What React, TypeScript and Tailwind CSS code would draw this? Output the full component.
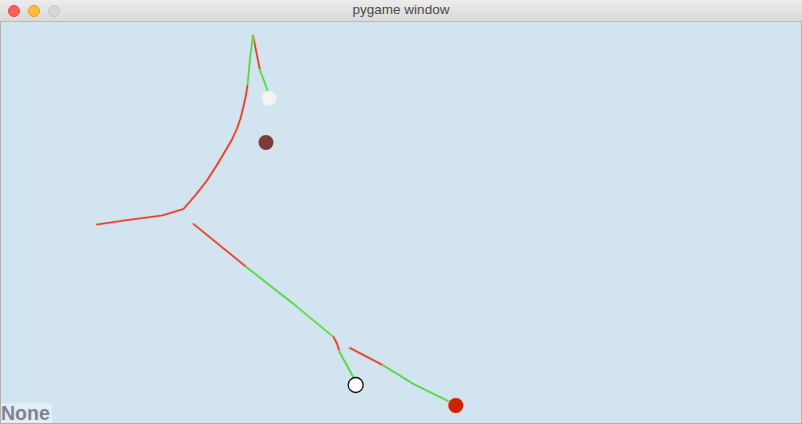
const red = "#d6432f";
const green = "#52d452";

type Seg = { pts: [number, number][]; color: string };

const segments: Seg[] = [
  // right prong of the fork at the top
  { pts: [[253, 35], [257, 55], [260, 70]], color: red },
  { pts: [[260, 70], [264, 80], [267.5, 90]], color: green },
  // left prong, bending down to the joint
  { pts: [[253, 35], [250, 58], [247.5, 85]], color: green },
  {
    pts: [
      [247.5, 85], [245.5, 97], [243, 108], [240.5, 118], [237, 128], [232, 139], [225, 151],
      [216, 166], [207, 180], [196, 194], [183.5, 208.5], [162, 215], [124, 220], [97, 224],
    ],
    color: red,
  },
  // long diagonal
  { pts: [[193.5, 223.5], [247, 267]], color: red },
  { pts: [[247, 267], [293, 303], [333.5, 336.5]], color: green },
  { pts: [[333.5, 336.5], [337, 343], [339.5, 351.5]], color: red },
  { pts: [[339.5, 351.5], [353.5, 377]], color: green },
  // lower right line
  { pts: [[350, 347.5], [383.5, 365]], color: red },
  { pts: [[383.5, 365], [413.5, 383.5], [450, 401.5]], color: green },
];

function Canvas() {
  return (
    <svg className="absolute inset-0 h-full w-full" viewBox="1 22 800 400">
      {segments.map((s, i) => (
        <g key={i}>
          <polyline
            points={s.pts.map((p) => p.join(",")).join(" ")}
            fill="none"
            stroke={s.color === red ? "#f3b5b0" : "#b5ecb5"}
            strokeWidth={3.2}
            strokeLinejoin="round"
            strokeLinecap="round"
            opacity={0.7}
          />
          <polyline
            points={s.pts.map((p) => p.join(",")).join(" ")}
            fill="none"
            stroke={s.color}
            strokeWidth={1.6}
            strokeLinejoin="round"
            strokeLinecap="round"
          />
        </g>
      ))}
      <circle cx={269} cy={98} r={7.5} fill="#f4f4f4" stroke="#e6e6e6" strokeWidth={1} />
      <circle cx={266} cy={142} r={7.5} fill="#7b3c38" />
      <circle cx={355.7} cy={384.5} r={7.5} fill="#ffffff" stroke="#111111" strokeWidth={1.3} />
      <circle cx={455.8} cy={405} r={8.5} fill="#f6c8c0" opacity={0.8} />
      <circle cx={455.8} cy={405} r={7.5} fill="#cc2400" />
    </svg>
  );
}

export default function App() {
  return (
    <div className="flex h-[424px] w-[802px] flex-col overflow-hidden bg-white font-['Liberation_Sans',sans-serif]">
      <div className="relative flex h-[22px] shrink-0 items-center border-b border-[#b9b9b9] bg-gradient-to-b from-[#ececec] to-[#d9d9d9]">
        <div className="flex items-center gap-[8px] pl-[8px]">
          <span className="h-[12px] w-[12px] rounded-full border border-[#e2463f] bg-[#fc605b]" />
          <span className="h-[12px] w-[12px] rounded-full border border-[#e1a116] bg-[#fdbc40]" />
          <span className="h-[12px] w-[12px] rounded-full border border-[#c6c6c6] bg-[#d8d8d8]" />
        </div>
        <div className="absolute inset-0 flex items-center justify-center text-[13.5px] text-[#4a4a4a]">
          pygame window
        </div>
      </div>
      <div className="flex flex-1 border-x border-b border-[#b0b0b0]">
        <div className="relative flex-1 bg-[#d3e4f1]">
          <Canvas />
          <div className="absolute bottom-0 left-0 bg-[#e4edf5] pr-[2px] text-[19.5px] font-bold leading-[20px] text-[#7c8691]">
            None
          </div>
        </div>
      </div>
    </div>
  );
}
